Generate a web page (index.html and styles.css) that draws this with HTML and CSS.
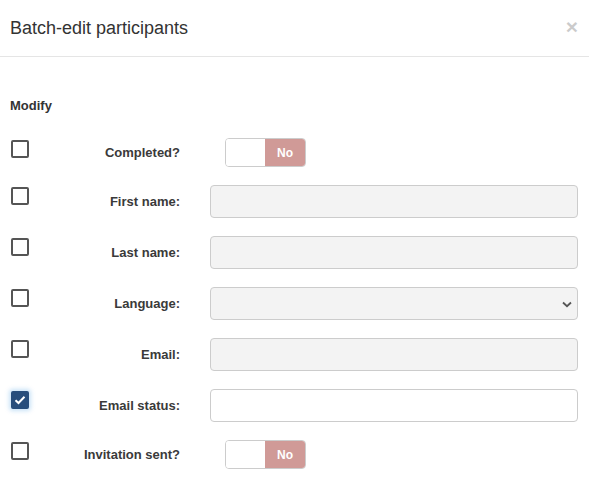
FILE: index.html
```html
<!DOCTYPE html>
<html>
<head>
<meta charset="utf-8">
<link rel="stylesheet" href="styles.css">
</head>
<body>
<div class="modal">
  <div class="modal-header">
    <h4 class="modal-title">Batch-edit participants</h4>
    <span class="close">&times;</span>
  </div>
  <div class="modal-body">
    <div class="section-label">Modify</div>
    <div class="form">
      <div class="row">
        <span class="cb"></span>
        <label class="lbl">Completed?</label>
        <div class="toggle"><span class="t-off"></span><span class="t-no">No</span></div>
      </div>
      <div class="row">
        <span class="cb"></span>
        <label class="lbl">First name:</label>
        <div class="input disabled"></div>
      </div>
      <div class="row">
        <span class="cb"></span>
        <label class="lbl">Last name:</label>
        <div class="input disabled"></div>
      </div>
      <div class="row">
        <span class="cb"></span>
        <label class="lbl">Language:</label>
        <div class="input disabled select">
          <svg class="chev" width="10" height="7" viewBox="0 0 10 7"><path d="M1 1.5 L5 5.2 L9 1.5" fill="none" stroke="#555" stroke-width="1.8"/></svg>
        </div>
      </div>
      <div class="row">
        <span class="cb"></span>
        <label class="lbl">Email:</label>
        <div class="input disabled"></div>
      </div>
      <div class="row">
        <span class="cb checked"><svg width="12" height="10" viewBox="0 0 12 10"><path d="M1.5 5.2 L4.5 8 L10.5 1.8" fill="none" stroke="#fff" stroke-width="2"/></svg></span>
        <label class="lbl">Email status:</label>
        <div class="input"></div>
      </div>
      <div class="row">
        <span class="cb"></span>
        <label class="lbl">Invitation sent?</label>
        <div class="toggle"><span class="t-off"></span><span class="t-no">No</span></div>
      </div>
    </div>
  </div>
</div>
</body>
</html>
```
FILE: styles.css
```css
html, body {
  margin: 0;
  padding: 0;
  background: #fff;
}
body {
  font-family: "Liberation Sans", Arial, sans-serif;
  color: #333;
  font-size: 13px;
}
.modal {
  width: 589px;
}
.modal-header {
  display: flex;
  align-items: flex-start;
  justify-content: space-between;
  padding: 15px 11px 15px 10px;
  border-bottom: 1px solid #e5e5e5;
  height: 26px;
}
.modal-title {
  margin: 0;
  font-size: 18px;
  font-weight: normal;
  line-height: 26px;
  color: #333;
}
.close {
  font-size: 21px;
  font-weight: bold;
  line-height: 20px;
  color: #000;
  opacity: 0.2;
  margin-top: 2px;
}
.modal-body {
  padding: 40px 11px 0 10px;
}
.section-label {
  font-weight: bold;
  font-size: 13px;
  line-height: 18px;
  color: #333;
  margin-bottom: 23px;
}
.form {
  display: flex;
  flex-direction: column;
  gap: 18px;
}
.row {
  display: grid;
  grid-template-columns: 41px 159px 1fr;
  align-items: center;
}
.cb {
  align-self: start;
  margin-top: 2px;
  margin-left: 1px;
  width: 14px;
  height: 14px;
  border: 2px solid #555;
  border-radius: 2px;
  display: flex;
  align-items: center;
  justify-content: center;
}
.cb.checked {
  background: #284e7c;
  border-color: #284e7c;
  box-shadow: 0 0 4px 2px rgba(102, 175, 233, 0.35);
}
.lbl {
  font-weight: bold;
  font-size: 13px;
  color: #3a3a3a;
  text-align: right;
  padding-right: 30px;
}
.input {
  height: 31px;
  border: 1px solid #ccc;
  border-radius: 4px;
  background: #fff;
  position: relative;
}
.input.disabled {
  background: #f3f3f3;
}
.chev {
  position: absolute;
  right: 5px;
  top: 13px;
}
.toggle {
  margin-left: 15px;
  width: 79px;
  height: 27px;
  border: 1px solid #ccc;
  border-radius: 4px;
  display: flex;
  overflow: hidden;
}
.t-off {
  width: 39px;
  background: #fff;
}
.t-no {
  flex: 1;
  background: #d09a97;
  color: #fff;
  font-weight: bold;
  font-size: 12px;
  display: flex;
  align-items: center;
  justify-content: center;
}
```
